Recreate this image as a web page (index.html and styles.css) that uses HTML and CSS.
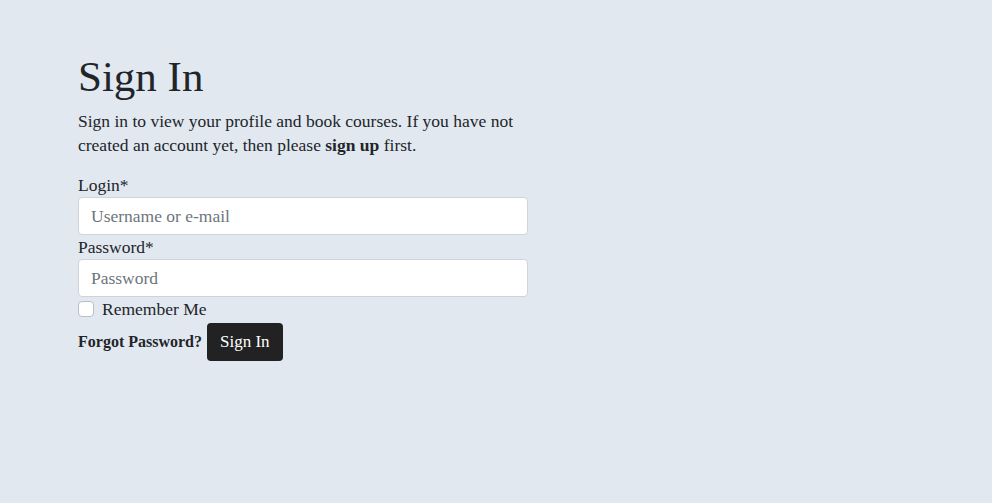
FILE: index.html
```html
<!DOCTYPE html>
<html lang="en">
<head>
<meta charset="utf-8">
<title>Sign In</title>
<link rel="stylesheet" href="styles.css">
</head>
<body>
<main class="page">
  <section class="signin">
    <h1 class="title">Sign In</h1>
    <p class="intro">Sign in to view your profile and book courses. If you have not created an account yet, then please <a class="link" href="#">sign up</a> first.</p>
    <form class="form">
      <label class="label" for="login">Login*</label>
      <input class="input" id="login" type="text" placeholder="Username or e-mail">
      <label class="label" for="password">Password*</label>
      <input class="input" id="password" type="password" placeholder="Password">
      <label class="check">
        <input class="checkbox" type="checkbox">
        <span>Remember Me</span>
      </label>
      <div class="actions">
        <a class="forgot" href="#">Forgot Password?</a>
        <button class="button" type="button">Sign In</button>
      </div>
    </form>
  </section>
</main>
</body>
</html>
```
FILE: styles.css
```css
* { box-sizing: border-box; }
html, body { margin: 0; padding: 0; }
body {
  background: #e2e8f0;
  color: #212529;
  font-family: "Liberation Serif", "Times New Roman", serif;
  font-size: 17.5px;
  line-height: 24px;
  min-height: 503px;
}
.page {
  padding: 53px 0 0 78px;
}
.signin {
  width: 450px;
}
.title {
  margin: 0 0 8px;
  font-size: 43px;
  line-height: 48px;
  font-weight: 400;
}
.intro {
  margin: 0 0 16px;
  width: 450px;
}
.link {
  color: #212529;
  font-weight: 700;
  text-decoration: none;
}
.form {
  display: flex;
  flex-direction: column;
}
.label {
  display: block;
}
.input {
  display: block;
  width: 450px;
  height: 38px;
  padding: 6px 12px;
  font: inherit;
  color: #212529;
  background: #fff;
  border: 1px solid #ced4da;
  border-radius: 4px;
  margin: 0;
}
.input::placeholder { color: #6c757d; }
.check {
  display: flex;
  align-items: center;
  gap: 8px;
  margin-top: 0;
}
.checkbox {
  appearance: none;
  width: 16px;
  height: 16px;
  margin: 0;
  background: #fff;
  border: 1px solid #b9bfc6;
  border-radius: 4px;
}
.actions {
  display: flex;
  align-items: center;
  gap: 5px;
  margin-top: 2px;
}
.forgot {
  color: #212529;
  font-weight: 700;
  font-size: 16px;
  text-decoration: none;
}
.button {
  height: 38px;
  padding: 0 13px;
  font: inherit;
  font-size: 17px;
  color: #fff;
  background: #222;
  border: 0;
  border-radius: 4px;
}
```
